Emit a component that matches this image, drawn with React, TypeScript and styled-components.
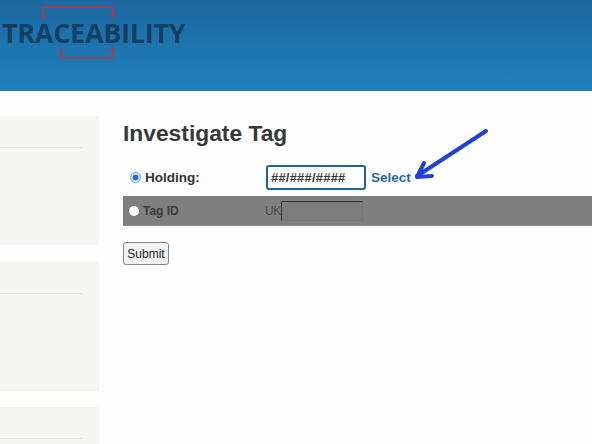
import React from "react";
import styled, { createGlobalStyle } from "styled-components";

const Global = createGlobalStyle`
  html, body { margin: 0; padding: 0; background: #fff; overflow: hidden; }
  body { font-family: "Liberation Sans", Arial, sans-serif; }
`;
const Page = styled.div`
  position: relative;
  width: 592px;
  height: 444px;
  overflow: hidden;
  background: #fefefe;
`;
const Header = styled.header`
  height: 91px;
  background: linear-gradient(180deg, #1b689f 0%, #2180bd 100%);
`;
const Logo = styled.div`
  position: relative;
  width: 190px;
  height: 91px;
  padding: 17px 0 0 2px;
  box-sizing: border-box;
`;
const LogoText = styled.div`
  font-family: "Open Sans", "Liberation Sans", sans-serif;
  font-size: 27px;
  line-height: 32px;
  font-weight: 700;
  letter-spacing: -0.3px;
  color: #123f62;
  filter: blur(0.35px);
  white-space: nowrap;
`;
const LogoMark = styled.svg`
  position: absolute;
  left: 0;
  top: 0;
`;
const Body = styled.div`
  display: flex;
  padding-top: 25px;
`;
const Sidebar = styled.aside`
  width: 99px;
  flex: none;
  display: flex;
  flex-direction: column;
  gap: 16.5px;
`;
const Card = styled.div`
  height: 129px;
  box-sizing: border-box;
  padding: 31px 17px 0 0;
  background: #f5f5f2;
  flex: none;
`;
const CardRule = styled.div`
  height: 1px;
  background: #e2e2de;
`;
const Main = styled.main`
  flex: 1;
  margin-left: 24px;
`;
const Title = styled.h1`
  margin: 4px 0 0;
  font-size: 22.8px;
  line-height: 27px;
  font-weight: 700;
  color: #383838;
`;
const HoldingRow = styled.div`
  display: flex;
  align-items: center;
  height: 25px;
  margin-top: 18px;
  padding-left: 7px;
`;
const Field = styled.label`
  display: flex;
  align-items: center;
  gap: 4px;
  width: 136px;
  flex: none;
  font-size: 13.5px;
  font-weight: 700;
  color: #333;
`;
const MutedField = styled(Field)`
  width: 136px;
  font-size: 12px;
  color: #3b3b3b;
`;
const Radio = styled.span<{ $on?: boolean }>`
  width: ${(p) => (p.$on ? "11px" : "10px")};
  height: ${(p) => (p.$on ? "11px" : "10px")};
  flex: none;
  box-sizing: border-box;
  border-radius: 50%;
  background: ${(p) => (p.$on ? "#1f6fd6" : "#fff")};
  border: ${(p) => (p.$on ? "1.5px solid #7fb0ee" : "none")};
  box-shadow: ${(p) => (p.$on ? "inset 0 0 0 1.5px #fff" : "none")};
`;
const HoldingInput = styled.div`
  width: 100px;
  height: 25px;
  box-sizing: border-box;
  border: 2px solid #1d6299;
  border-radius: 3px;
  padding-left: 3px;
  background: #fff;
  font-size: 13px;
  font-weight: 700;
  line-height: 21px;
  letter-spacing: 0.2px;
  color: #3a3a3a;
`;
const SelectLink = styled.a`
  margin-left: 5px;
  font-size: 13.5px;
  font-weight: 700;
  color: #1c6ba5;
`;
const TagRow = styled.div`
  display: flex;
  align-items: center;
  height: 30px;
  margin-top: 6px;
  padding-left: 6px;
  background: #7f7f7f;
  border-bottom: 1px solid #8c8c8c;
  box-sizing: border-box;
`;
const Uk = styled.span`
  width: 16px;
  flex: none;
  font-size: 12px;
  letter-spacing: -0.3px;
  color: #4a4a4a;
`;
const TagInput = styled.div`
  width: 82px;
  height: 20px;
  box-sizing: border-box;
  border-top: 1px solid #333;
  border-left: 1px solid #333;
  border-right: 1px solid #777;
  border-bottom: 1px solid #777;
  background: #7c7c7c;
`;
const SubmitButton = styled.button`
  display: block;
  width: 46px;
  height: 23px;
  margin-top: 16px;
  padding: 0;
  box-sizing: border-box;
  border: 1px solid #858585;
  border-radius: 3px;
  background: #f2f2f2;
  font-family: "Liberation Sans", Arial, sans-serif;
  font-size: 12px;
  color: #222;
`;
const Annotation = styled.svg`
  position: absolute;
  left: 400px;
  top: 120px;
`;

export default function App() {
  return (
    <Page>
      <Global />
      <Header>
        <Logo>
          <LogoText>TRACEABILITY</LogoText>
          <LogoMark width="190" height="91" viewBox="0 0 190 91" fill="none">
            <g stroke="#b23a4c" strokeWidth="1.4">
              <path d="M43 15 V7 H113 V15" />
              <path d="M61 50 V58 H113 V50" />
            </g>
            <g fill="#c8303f">
              <path d="M43 12 L45.5 18 H41 Z" />
              <path d="M112.5 10 L115 17 H111 Z" />
              <path d="M61 48 L63 54 H59.5 Z" />
              <path d="M112.5 46 L115 52 H110.5 Z" />
            </g>
          </LogoMark>
        </Logo>
      </Header>
      <Body>
        <Sidebar>
          <Card><CardRule /></Card>
          <Card><CardRule /></Card>
          <Card><CardRule /></Card>
        </Sidebar>
        <Main>
          <Title>Investigate Tag</Title>
          <HoldingRow>
            <Field><Radio $on />Holding:</Field>
            <HoldingInput>##/###/####</HoldingInput>
            <SelectLink>Select</SelectLink>
          </HoldingRow>
          <TagRow>
            <MutedField><Radio />Tag ID</MutedField>
            <Uk>UK</Uk>
            <TagInput />
          </TagRow>
          <SubmitButton>Submit</SubmitButton>
        </Main>
      </Body>
      <Annotation width="100" height="70" viewBox="0 0 100 70" fill="none">
        <g stroke="#2140d8" strokeLinecap="round" strokeLinejoin="round" strokeWidth="4">
          <path d="M86 11 L17 56" />
          <path d="M24 43 L17 57 L32 56" />
        </g>
      </Annotation>
    </Page>
  );
}
